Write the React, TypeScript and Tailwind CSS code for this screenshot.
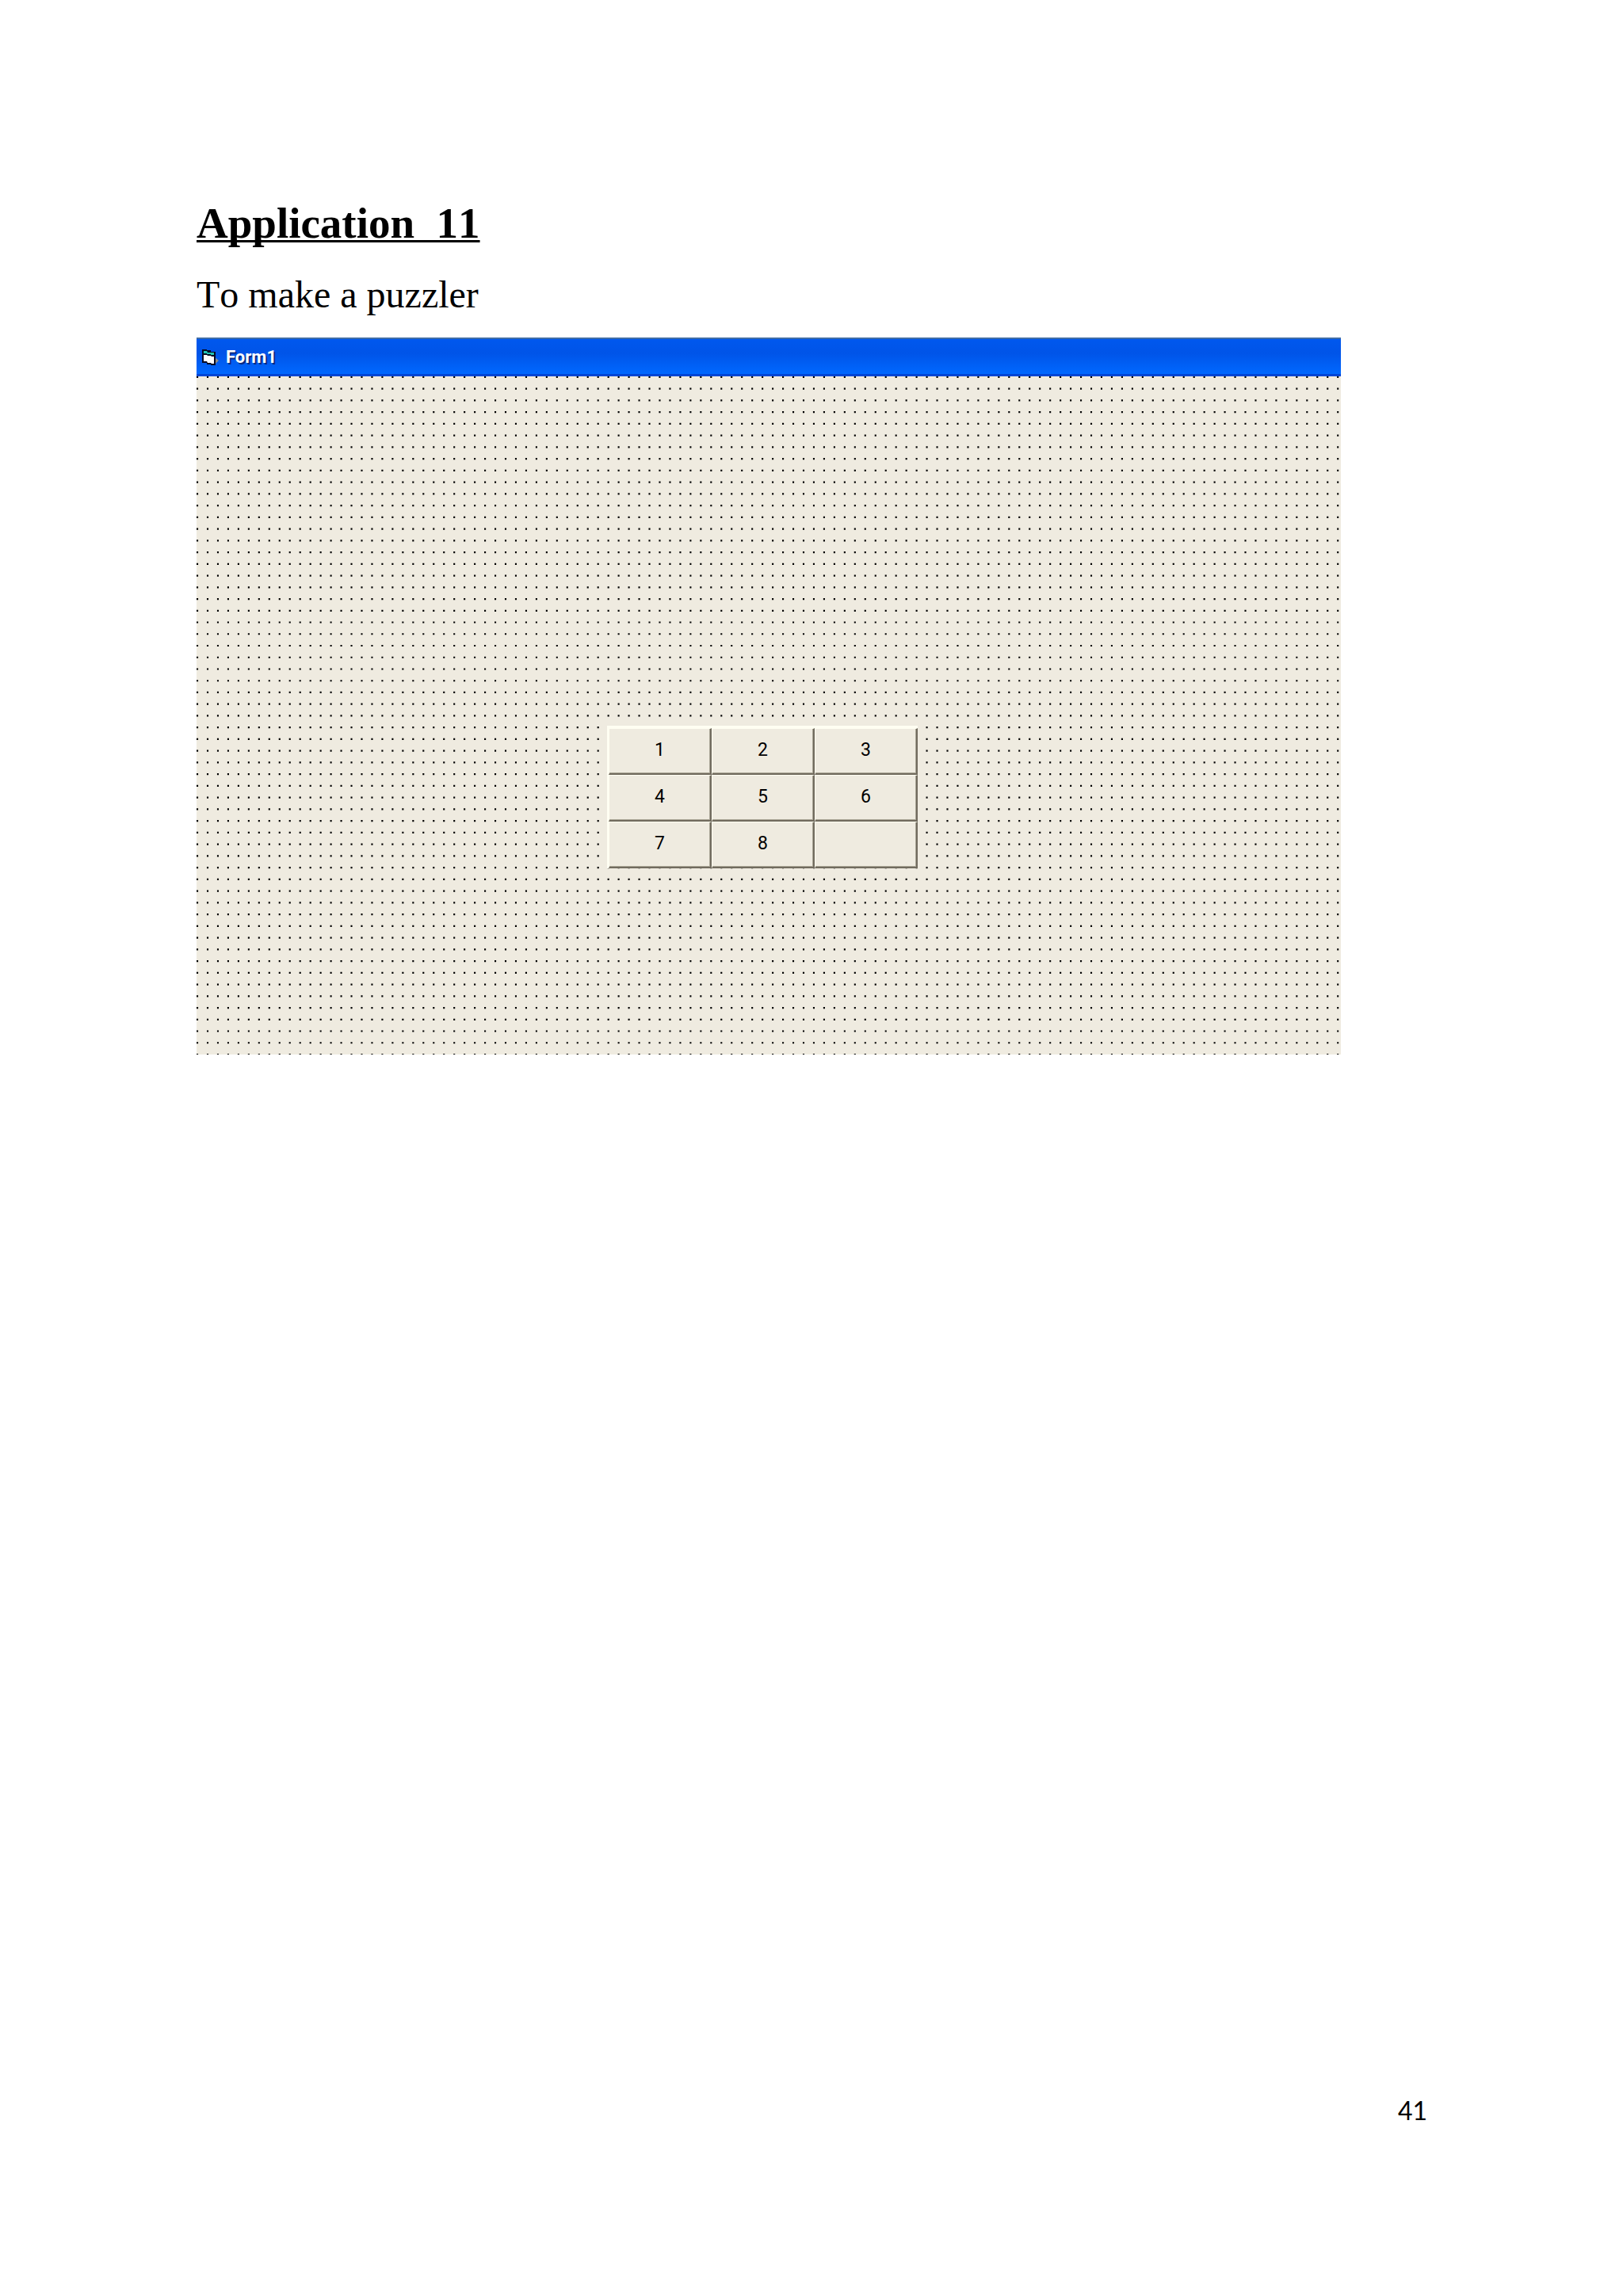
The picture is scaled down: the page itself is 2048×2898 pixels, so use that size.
const DOT_ROWS = Array.from({ length: 59 }, (_, row) => row * 8 + 0.5);
const TILES = ['1', '2', '3', '4', '5', '6', '7', '8', ''];

function FormIcon() {
  return (
    <svg viewBox="0 0 22 22" className="h-[22px] w-[22px] shrink-0" aria-hidden="true">
      <path d="M16 11l5 4-5 5z" fill="#8b8a86" />
      <path d="M0 1h6v1h5v2h6v17h-6v-1H6v-2H0z" fill="#050a24" />
      <path d="M2 3h4l1 2h8v3h-4V7H6V6H2z" fill="#20c5b5" />
      <path d="M2 8h4l1 1h4l1 1h3v9h-3l-1-1H7l-1-2H2z" fill="#fff" />
    </svg>
  );
}

function DesignerGrid() {
  return (
    <svg
      viewBox="0 0 891 464.5"
      preserveAspectRatio="none"
      className="absolute inset-0 h-full w-full"
      aria-hidden="true"
    >
      {DOT_ROWS.map((y) => (
        <path key={y} d={`M0 ${y}H891`} stroke="#000" strokeWidth="1.2" strokeDasharray="1.3 6.7" />
      ))}
    </svg>
  );
}

export default function App() {
  return (
    <div className="flex min-h-screen flex-col bg-white pt-[250px] pr-[356px] pl-[248px] text-black">
      <h1 className="font-['Liberation_Serif',serif] text-[55px] leading-[64px] font-bold whitespace-pre underline decoration-[3px] underline-offset-[3px] [font-kerning:none] [text-decoration-skip-ink:none]">
        {'Application  11'}
      </h1>
      <p className="mt-[30px] font-['Liberation_Serif',serif] text-[48px] leading-[56px] [font-kerning:none]">
        To make a puzzler
      </p>

      <section className="mt-[26px]">
        <header className="flex h-[49px] items-center gap-2 border-t-2 border-b-3 border-t-[#3f6da8] border-b-[#0046d5] bg-linear-to-b from-[#0058ee] via-[#0054e8] via-40% to-[#0068ff] pt-px pl-[7px]">
          <FormIcon />
          <h2 className="font-['Roboto',sans-serif] text-[22px] font-bold text-white [text-shadow:2px_2px_0_#0a2a80]">
            Form1
          </h2>
        </header>
        <div className="relative h-[856px] bg-[#efebe0] pt-[441px] pl-[518px]">
          <DesignerGrid />
          <div className="relative grid w-[392px] grid-cols-3 border-t-3 border-l-2 border-[#fffef2] bg-[#efebe0]">
            {TILES.map((label, index) => (
              <button
                key={index}
                type="button"
                aria-label={label || 'Empty tile'}
                className="h-[59px] border-t border-r-2 border-b-2 border-l border-t-[#fffef2] border-r-[#716b5e] border-b-[#716b5e] border-l-[#fffef2] bg-[#efebe0] pb-[3px] font-['Roboto',sans-serif] text-[23px] leading-none shadow-[inset_-1px_-1px_0_#aaa596]"
              >
                {label}
              </button>
            ))}
          </div>
        </div>
      </section>

      <footer className="mt-auto mr-[-109px] pb-[214px] text-right font-['Lato',sans-serif] text-[32px] leading-[40px]">
        41
      </footer>
    </div>
  );
}
